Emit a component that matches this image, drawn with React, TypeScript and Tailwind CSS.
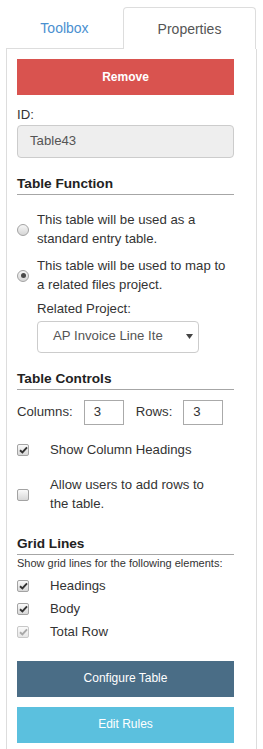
import React from 'react';

function Radio({ checked }: { checked?: boolean }) {
  return (
    <span className="flex h-[12px] w-[12px] shrink-0 items-center justify-center rounded-full border border-[#a3a3a3] bg-gradient-to-b from-[#f6f6f6] to-[#d6d6d6]">
      {checked && <span className="h-[5px] w-[5px] rounded-full bg-[#4a4a4a]" />}
    </span>
  );
}

function Check({ checked, disabled }: { checked?: boolean; disabled?: boolean }) {
  return (
    <span
      className={
        disabled
          ? 'flex h-[12px] w-[12px] shrink-0 items-center justify-center rounded-[2px] border border-[#c8c8c8] bg-gradient-to-b from-[#fafafa] to-[#e6e6e6]'
          : 'flex h-[12px] w-[12px] shrink-0 items-center justify-center rounded-[2px] border border-[#a3a3a3] bg-gradient-to-b from-[#fafafa] to-[#d8d8d8]'
      }
    >
      {checked && (
        <svg width="9" height="8" viewBox="0 0 9 8">
          <path
            d="M1 4.2 L3.4 6.5 L8 1.3"
            fill="none"
            stroke={disabled ? '#a8a8a8' : '#333'}
            strokeWidth="1.9"
          />
        </svg>
      )}
    </span>
  );
}

function Heading({ children, className }: { children: React.ReactNode; className: string }) {
  return (
    <div className={`border-b border-[#a6a6a6] text-[13.65px] font-bold leading-[20px] text-[#222] ${className}`}>
      {children}
    </div>
  );
}

export default function App() {
  return (
    <div className="h-[749px] w-[263px] overflow-hidden bg-white font-['Liberation_Sans',Arial,sans-serif] text-[13.2px] leading-[18.5px] text-[#333]">
      <div className="flex pl-[6px] pr-[7px] pt-[7px]">
        <div className="flex h-[42px] flex-1 items-center justify-center border-b border-[#ddd] pt-[2px] text-[14px] text-[#4a90d0]">
          Toolbox
        </div>
        <div className="flex h-[42px] w-[133px] items-center justify-center rounded-t-[4px] border border-b-0 border-[#ddd] pt-[1px] text-[14px] text-[#555]">
          Properties
        </div>
      </div>

      <div className="mx-[6px] h-[720px] border-x border-[#ddd] pl-[10px] pr-[22px] pt-[10px]">
        <button className="flex h-[36px] w-full items-center justify-center bg-[#d9534f] text-[12px] font-bold text-white">
          Remove
        </button>

        <div className="mt-[10px] leading-[20px]">ID:</div>
        <div className="flex h-[33px] items-center rounded-[4px] border border-[#ccc] bg-[#eee] pl-[12px] text-[#555]">
          Table43
        </div>

        <Heading className="mt-[16px]">Table Function</Heading>

        <div className="mt-[16px] flex items-center gap-[8px]">
          <Radio />
          <div>
            This table will be used as a<br />standard entry table.
          </div>
        </div>
        <div className="mt-[9px] flex items-center gap-[8px]">
          <Radio checked />
          <div>
            This table will be used to map to<br />a related files project.
          </div>
        </div>
        <div className="pl-[20px]">
          <div className="mt-[6px]">Related Project:</div>
          <div className="mt-[2px] flex h-[32px] w-[162px] items-center rounded-[4px] border border-[#ccc] pl-[15px] text-[#555]">
            <span className="w-[115px] whitespace-nowrap">AP Invoice Line Ite</span>
            <svg className="ml-[18px]" width="7" height="5" viewBox="0 0 7 5">
              <path d="M0 0 H7 L3.5 5 Z" fill="#444" />
            </svg>
          </div>
        </div>

        <Heading className="mt-[16px]">Table Controls</Heading>

        <div className="mt-[10px] flex items-center">
          <span>Columns:</span>
          <div className="ml-[11px] flex h-[25px] w-[40px] items-center border border-[#aaa] pl-[9px]">3</div>
          <span className="ml-[12px]">Rows:</span>
          <div className="ml-[11px] flex h-[25px] w-[40px] items-center border border-[#aaa] pl-[9px]">3</div>
        </div>

        <div className="mt-[16px] flex items-center gap-[21px]">
          <Check checked />
          <span>Show Column Headings</span>
        </div>
        <div className="mt-[17px] flex items-center gap-[21px]">
          <Check />
          <div>
            Allow users to add rows to<br />the table.
          </div>
        </div>

        <Heading className="mt-[21px]">Grid Lines</Heading>
        <div className="mt-[1px] text-[11px] leading-[15px]">Show grid lines for the following elements:</div>

        <div className="mt-[6px] flex items-center gap-[21px]">
          <Check checked />
          <span>Headings</span>
        </div>
        <div className="mt-[4px] flex items-center gap-[21px]">
          <Check checked />
          <span>Body</span>
        </div>
        <div className="mt-[5px] flex items-center gap-[21px]">
          <Check checked disabled />
          <span>Total Row</span>
        </div>

        <button className="mt-[19px] flex h-[36px] w-full items-center justify-center bg-[#4a6d86] text-[12px] text-white">
          Configure Table
        </button>
        <button className="mt-[10px] flex h-[36px] w-full items-center justify-center bg-[#5bc0de] text-[12px] text-white">
          Edit Rules
        </button>
      </div>
    </div>
  );
}
